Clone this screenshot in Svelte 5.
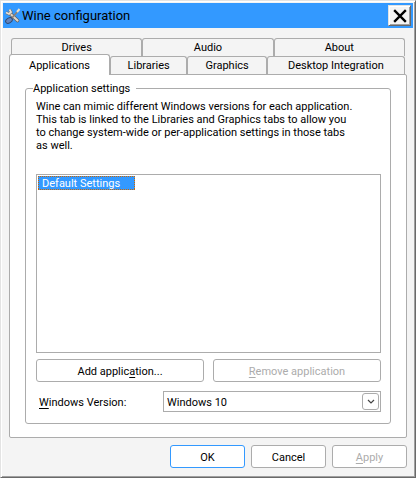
<script>
  const backTabs = ['Drives', 'Audio', 'About'];
  const frontTabs = [
    { name: 'Applications', kind: 'apps' },
    { name: 'Libraries', kind: 'libs' },
    { name: 'Graphics', kind: 'gfx' },
    { name: 'Desktop Integration', kind: 'desk' }
  ];
  let selected = $state('Applications');
  let version = $state('Windows 10');
</script>

<main class="window">
  <header>
    <svg class="logo" viewBox="0 0 16 16" aria-hidden="true">
      <path d="M5 5.5 12.5 12.5" stroke="#66605c" stroke-width="3.6" stroke-linecap="round" />
      <path d="M5 5.5 12.5 12.5" stroke="#ddd5cc" stroke-width="2.2" stroke-linecap="round" />
      <path d="M4.5 1.5 6 4 4 6 1 4.5" fill="none" stroke="#77706a" stroke-width="3" />
      <path d="M4.5 1.5 6 4 4 6 1 4.5" fill="none" stroke="#e6e0d8" stroke-width="1.8" />
      <path d="M14 2 6 11" stroke="#8d8278" stroke-width="1.8" />
      <path d="M12 4 14.5 1" stroke="#e9dfcf" stroke-width="2" />
      <ellipse cx="4" cy="12.5" rx="3.6" ry="2.4" transform="rotate(-30 4 12.5)" fill="#6484bd" stroke="#34496d" />
    </svg>
    <h1>Wine configuration</h1>
    <button class="close" aria-label="Close">
      <svg viewBox="0 0 12 12" aria-hidden="true"><path d="M1 1 11 11M11 1 1 11" stroke="#000" stroke-width="2" /></svg>
    </button>
  </header>

  <div class="body">
    <div role="tablist" aria-label="Settings pages" class="tabs">
      <div class="row back" role="presentation">
        {#each backTabs as tab}
          <button role="tab" aria-selected={selected === tab} onclick={() => (selected = tab)}>{tab}</button>
        {/each}
      </div>
      <div class="row front" role="presentation">
        {#each frontTabs as tab}
          <button role="tab" class={tab.kind} aria-selected={selected === tab.name} onclick={() => (selected = tab.name)}>{tab.name}</button>
        {/each}
      </div>
    </div>

    <section class="panel" role="tabpanel" aria-label="Applications">
      <fieldset>
        <legend>Application settings</legend>
        <div class="group">
          <p>
            Wine can mimic different Windows versions for each application.<br />
            This tab is linked to the Libraries and Graphics tabs to allow you<br />
            to change system-wide or per-application settings in those tabs<br />
            as well.
          </p>
          <ul role="listbox" aria-label="Applications">
            <li role="option" aria-selected="true">Default Settings</li>
          </ul>
          <div class="pair">
            <button class="push">Add applic<u>a</u>tion...</button>
            <button class="push" disabled><u>R</u>emove application</button>
          </div>
          <div class="version">
            <label for="version"><u>W</u>indows Version:</label>
            <div class="combo">
              <select id="version" bind:value={version}>
                <option>Windows 10</option>
                <option>Windows 8.1</option>
                <option>Windows 7</option>
              </select>
              <span class="arrow">
                <svg viewBox="0 0 8 5" aria-hidden="true"><path d="M1 1 4 4 7 1" fill="none" stroke="#444" stroke-width="1.2" /></svg>
              </span>
            </div>
          </div>
        </div>
      </fieldset>
    </section>

    <footer>
      <button class="push default">OK</button>
      <button class="push">Cancel</button>
      <button class="push" disabled><u>A</u>pply</button>
    </footer>
  </div>
</main>

<style>
  :global(body) {
    margin: 0;
  }
  .window,
  .window * {
    box-sizing: border-box;
  }
  .window {
    min-height: 100vh;
    display: flex;
    flex-direction: column;
    padding: 1px;
    background: #f4f4f4;
    border: 1px solid #e3e3e3;
    border-right-color: #696969;
    border-bottom-color: #696969;
    box-shadow: inset 1px 1px #fff, inset -1px -1px #a0a0a0;
    font: 11px/13px Roboto, 'DejaVu Sans', sans-serif;
    color: #000;
  }
  button,
  select {
    font: inherit;
    color: inherit;
    margin: 0;
    padding: 0;
  }
  header {
    display: flex;
    align-items: center;
    height: 25px;
    margin: 1px 1px 0;
    padding: 0 2px;
    background: #3399ff;
  }
  .logo {
    width: 16px;
    height: 16px;
    margin-right: 1px;
    flex: none;
  }
  h1 {
    flex: 1;
    margin: 0;
    font-size: 13px;
    line-height: 16px;
    font-weight: normal;
  }
  .close {
    display: grid;
    place-items: center;
    width: 23px;
    height: 21px;
    background: #f4f4f4;
    border: 1px solid #e3e3e3;
    border-right-color: #696969;
    border-bottom-color: #696969;
    box-shadow: inset 1px 1px #fff, inset -1px -1px #a0a0a0;
  }
  .close svg {
    width: 14px;
    height: 14px;
  }
  .body {
    flex: 1;
    display: flex;
    flex-direction: column;
    padding: 10px 7px 8px;
  }
  .row {
    display: flex;
    align-items: flex-end;
  }
  .back {
    padding: 0 2px;
  }
  .front {
    padding-right: 2px;
    margin-top: -2px;
  }
  .row button {
    flex: 1;
    height: 18px;
    background: #f4f4f4;
    border: 1px solid #acacac;
    border-bottom: 0;
    border-radius: 3px 3px 0 0;
    white-space: nowrap;
  }
  .row .apps {
    flex: 101;
  }
  .row .libs {
    flex: 77;
  }
  .row .gfx {
    flex: 79;
  }
  .row .desk {
    flex: 139;
  }
  .row button[aria-selected='true'] {
    height: 21px;
    margin-bottom: -1px;
    background: #fff;
    z-index: 1;
  }
  .panel {
    flex: 1;
    display: flex;
    padding: 7px 15px 13px;
    background: #fff;
    border: 1px solid #acacac;
    border-radius: 0 2px 2px 2px;
  }
  fieldset {
    flex: 1;
    min-width: 0;
    margin: 0;
    padding: 0 9px 11px 10px;
    border: 1px solid #acacac;
    border-radius: 3px;
    display: flex;
  }
  legend {
    margin-left: -3px;
    padding: 0 6px 0 0;
  }
  .group {
    flex: 1;
    min-width: 0;
    display: flex;
    flex-direction: column;
  }
  p {
    margin: 5px 0 22px;
    white-space: nowrap;
  }
  ul {
    flex: 1;
    margin: 0;
    padding: 1px;
    list-style: none;
    border: 1px solid #acacac;
  }
  li {
    --across: repeating-linear-gradient(90deg, #cc6600 0 1px, #3399ff 1px 2px);
    --down: repeating-linear-gradient(180deg, #cc6600 0 1px, #3399ff 1px 2px);
    width: 97px;
    height: 14px;
    padding: 1px 4px 0;
    background:
      var(--across) top / 100% 1px no-repeat,
      var(--across) bottom / 100% 1px no-repeat,
      var(--down) left / 1px 100% no-repeat,
      var(--down) right / 1px 100% no-repeat,
      #3399ff;
    color: #fff;
    line-height: 13px;
    white-space: nowrap;
  }
  .pair {
    display: flex;
    gap: 9px;
    margin-top: 6px;
  }
  .push {
    flex: 1;
    height: 23px;
    padding-top: 1px;
    background: #fff;
    border: 1px solid #acacac;
    border-radius: 3px;
  }
  .push:disabled {
    color: #acacac;
  }
  .default {
    border-color: #3399ff;
  }
  u {
    text-underline-offset: 2px;
  }
  .version {
    display: flex;
    align-items: center;
    margin-top: 9px;
  }
  label {
    width: 127px;
    padding: 1px 0 0 3px;
  }
  .combo {
    flex: 1;
    position: relative;
  }
  select {
    display: block;
    width: 100%;
    height: 21px;
    padding: 1px 20px 0 3px;
    appearance: none;
    background: #fff;
    border: 1px solid #acacac;
    border-radius: 0;
  }
  .arrow {
    position: absolute;
    top: 2px;
    right: 2px;
    width: 17px;
    height: 17px;
    display: grid;
    place-items: center;
    border: 1px solid #acacac;
    border-radius: 3px;
    pointer-events: none;
  }
  .arrow svg {
    width: 8px;
    height: 5px;
  }
  footer {
    display: flex;
    justify-content: flex-end;
    gap: 6px;
    margin-top: 7px;
  }
  footer .push {
    flex: 0 1 75px;
  }
</style>
